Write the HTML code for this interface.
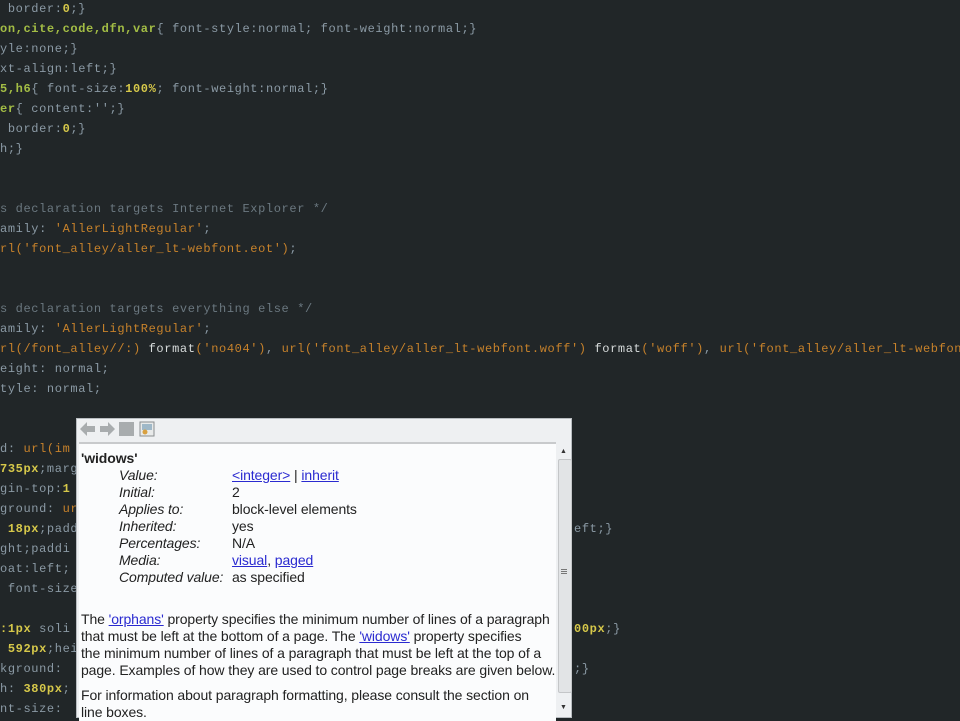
<!DOCTYPE html>
<html><head><meta charset="utf-8"><style>
html,body{margin:0;padding:0;width:960px;height:720px;overflow:hidden;background:#212628;}
.code{position:absolute;left:0;top:0;font-family:"Liberation Mono",monospace;font-size:12px;letter-spacing:0.62px;line-height:20px;color:#8b9aa5;white-space:pre;}
.l{position:absolute;left:0;height:20px;white-space:pre;}
.g{color:#a3bd45;font-weight:bold}
.y{color:#d6c84a;font-weight:bold}
.o{color:#c7822b}
.c{color:#6b7880}
.w{color:#d8dcdc}
.p{color:#8b9aa5}
#pop{position:absolute;left:76px;top:418px;width:496px;height:300px;background:#eef0f2;border:1px solid #b8bcc0;box-sizing:border-box;}
#tb{position:absolute;left:0;top:0;width:100%;height:22px;}
#cnt{position:absolute;left:2px;top:23px;width:477px;height:277px;background:#fbfcfd;border-top:2px solid #c8cacc;overflow:hidden;font-family:"Liberation Sans",sans-serif;font-size:14px;color:#222;letter-spacing:-0.1px;}
#sb{position:absolute;left:480px;top:26px;width:14px;height:270px;}
a{color:#2a2ad0;text-decoration:underline}
table{border-collapse:collapse;margin-left:40px;}
td{padding:0;height:17px;line-height:17px;}
td.k{font-style:italic;width:113px;}
</style></head><body>
<div class="code">
<div class="l" style="top:-1px"><span class="p"> border:</span><span class="y">0</span><span class="p">;}</span></div>
<div class="l" style="top:19px"><span class="g">on,cite,code,dfn,var</span><span class="p">{ font-style:normal; font-weight:normal;}</span></div>
<div class="l" style="top:39px"><span class="p">yle:none;}</span></div>
<div class="l" style="top:59px"><span class="p">xt-align:left;}</span></div>
<div class="l" style="top:79px"><span class="g">5,h6</span><span class="p">{ font-size:</span><span class="y">100%</span><span class="p">; font-weight:normal;}</span></div>
<div class="l" style="top:99px"><span class="g">er</span><span class="p">{ content:'';}</span></div>
<div class="l" style="top:119px"><span class="p"> border:</span><span class="y">0</span><span class="p">;}</span></div>
<div class="l" style="top:139px"><span class="p">h;}</span></div>
<div class="l" style="top:199px"><span class="c">s declaration targets Internet Explorer */</span></div>
<div class="l" style="top:219px"><span class="p">amily: </span><span class="o">'AllerLightRegular'</span><span class="p">;</span></div>
<div class="l" style="top:239px"><span class="o">rl('font_alley/aller_lt-webfont.eot')</span><span class="p">;</span></div>
<div class="l" style="top:299px"><span class="c">s declaration targets everything else */</span></div>
<div class="l" style="top:319px"><span class="p">amily: </span><span class="o">'AllerLightRegular'</span><span class="p">;</span></div>
<div class="l" style="top:339px"><span class="o">rl(/font_alley//:)</span> <span class="w">format</span><span class="o">('no404')</span><span class="p">, </span><span class="o">url('font_alley/aller_lt-webfont.woff')</span> <span class="w">format</span><span class="o">('woff')</span><span class="p">, </span><span class="o">url('font_alley/aller_lt-webfont</span></div>
<div class="l" style="top:359px"><span class="p">eight: normal;</span></div>
<div class="l" style="top:379px"><span class="p">tyle: normal;</span></div>
<div class="l" style="top:439px"><span class="p">d: </span><span class="o">url(im</span></div>
<div class="l" style="top:459px"><span class="y">735px</span><span class="p">;marg</span></div>
<div class="l" style="top:479px"><span class="p">gin-top:</span><span class="y">1</span></div>
<div class="l" style="top:499px"><span class="p">ground: </span><span class="o">ur</span></div>
<div class="l" style="top:519px"><span class="y"> 18px</span><span class="p">;padd</span></div>
<div class="l" style="top:539px"><span class="p">ght;paddi</span></div>
<div class="l" style="top:559px"><span class="p">oat:left;</span></div>
<div class="l" style="top:579px"><span class="p"> font-size</span></div>
<div class="l" style="top:619px"><span class="y">:1px</span><span class="p"> soli</span></div>
<div class="l" style="top:639px"><span class="y"> 592px</span><span class="p">;hei</span></div>
<div class="l" style="top:659px"><span class="p">kground: </span></div>
<div class="l" style="top:679px"><span class="p">h: </span><span class="y">380px</span><span class="p">;</span></div>
<div class="l" style="top:699px"><span class="p">nt-size: </span></div>
<div class="l" style="top:519px;left:574px"><span class="p">eft;}</span></div>
<div class="l" style="top:619px;left:574px"><span class="y">00px</span><span class="p">;}</span></div>
<div class="l" style="top:659px;left:574px"><span class="p">;}</span></div>
</div>
<div id="pop">
<svg id="tb" width="496" height="22">
<path d="M3 10 L10 3 L10 7 L18 7 L18 13 L10 13 L10 17 Z" fill="#a8acae"/>
<path d="M38 10 L31 3 L31 7 L23 7 L23 13 L31 13 L31 17 Z" fill="#a8acae"/>
<rect x="42" y="3" width="15" height="14" fill="#a8acae"/>
<rect x="63" y="3" width="14" height="14" fill="#e8eaea" stroke="#8a8e90"/>
<rect x="65" y="5" width="10" height="6" fill="#9fb8c8"/>
<circle cx="68" cy="13" r="2.5" fill="#d8a040"/>
</svg>
<div id="cnt">
<div style="font-weight:bold;font-size:14px;margin:6px 0 0 2px;line-height:17px;">'widows'</div>
<table>
<tr><td class="k">Value:</td><td><a>&lt;integer&gt;</a> | <a>inherit</a></td></tr>
<tr><td class="k">Initial:</td><td>2</td></tr>
<tr><td class="k">Applies to:</td><td>block-level elements</td></tr>
<tr><td class="k">Inherited:</td><td>yes</td></tr>
<tr><td class="k">Percentages:</td><td>N/A</td></tr>
<tr><td class="k">Media:</td><td><a>visual</a>, <a>paged</a></td></tr>
<tr><td class="k">Computed value:</td><td>as specified</td></tr>
</table>
<p style="margin:25px 0 0 2px;line-height:17px;white-space:nowrap;">The <a>'orphans'</a> property specifies the minimum number of lines of a paragraph<br>that must be left at the bottom of a page. The <a>'widows'</a> property specifies<br>the minimum number of lines of a paragraph that must be left at the top of a<br>page. Examples of how they are used to control page breaks are given below.</p>
<p style="margin:8px 0 0 2px;line-height:17px;white-space:nowrap;">For information about paragraph formatting, please consult the section on<br>line boxes.</p>
</div>
<div id="sb">
<div style="position:absolute;left:3px;top:2px;font-size:7px;color:#333;">▲</div>
<div style="position:absolute;left:1px;top:14px;width:12px;height:232px;background:#e2e4e6;border:1px solid #c4c6c8;border-radius:2px;"></div>
<div style="position:absolute;left:4px;top:124px;width:6px;height:1px;background:#777;box-shadow:0 2px 0 #777,0 4px 0 #777"></div>
<div style="position:absolute;left:3px;top:258px;font-size:7px;color:#333;">▼</div>
</div>
</div>
</body></html>
